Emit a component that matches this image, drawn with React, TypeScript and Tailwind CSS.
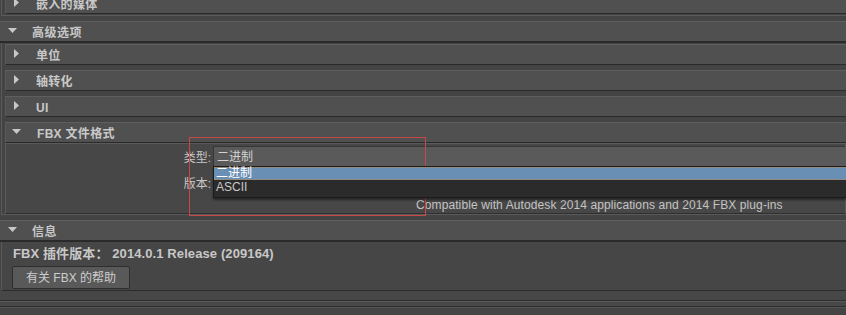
import React from "react";

const FONT = "font-['Liberation_Sans','Noto_Sans_CJK_SC',sans-serif]";

function RightTri() {
  return (
    <svg width="5" height="9" viewBox="0 0 5 9" className="shrink-0">
      <polygon points="0,0 5,4.5 0,9" fill="#c8c8c8" />
    </svg>
  );
}

function DownTri() {
  return (
    <svg width="9" height="5" viewBox="0 0 9 5" className="shrink-0">
      <polygon points="0,0 9,0 4.5,5" fill="#c8c8c8" />
    </svg>
  );
}

function SubHeader({ label, open = false, mb = true }: { label: string; open?: boolean; mb?: boolean }) {
  return (
    <div
      className={`h-[21px] flex items-center bg-[#505050] border-t border-t-[#5f5f5f] border-b border-b-[#2a2a2a] border-l border-l-[#5a5a5a] ${mb ? "mb-[5px]" : ""}`}
    >
      {open ? (
        <div className="ml-[6px] mt-[-2px]">
          <DownTri />
        </div>
      ) : (
        <div className="ml-[8px] mt-[-3px]">
          <RightTri />
        </div>
      )}
      <span className={`${open ? "ml-[16px]" : "ml-[17px]"} text-[12px] font-bold text-[#c8c8c8] leading-none pt-[2px] tracking-[0.3px]`}>
        {label}
      </span>
    </div>
  );
}

function TopHeader({ label }: { label: string }) {
  return (
    <div className="h-[22px] flex items-center bg-[#505050] border-t border-t-[#5f5f5f] border-b-2 border-b-[#2a2a2a]">
      <div className="ml-[8px] mt-[-2px]">
        <DownTri />
      </div>
      <span className="ml-[15px] text-[12px] font-bold text-[#c8c8c8] leading-none pt-[3px] tracking-[0.5px]">{label}</span>
    </div>
  );
}

export default function App() {
  return (
    <div className={`relative w-[846px] h-[315px] overflow-hidden bg-[#444444] ${FONT}`}>
      <div className="-mt-[7px]">
        {/* previous section content (partial) */}
        <div className="ml-[1px] border-l border-l-[#5a5a5a] pl-[3px] pb-[1px] border-b border-b-[#5a5a5a]">
          <SubHeader label="嵌入的媒体" mb={false} />
        </div>

        <div className="mt-[5px]">
          <TopHeader label="高级选项" />
          <div className="ml-[1px] border-l border-l-[#5a5a5a] pl-[3px] pt-[1px] border-b border-b-[#5a5a5a]">
            <SubHeader label="单位" />
            <SubHeader label="轴转化" />
            <SubHeader label="UI" />
            <SubHeader label="FBX 文件格式" open mb={false} />
            {/* FBX content */}
            <div className="h-[71px] border border-[#5a5a5a] border-b-[#2f2f2f] bg-[#474747] pt-[2px]">
              <div className="flex h-[20px]">
                <div className="w-[205px] text-right text-[12px] text-[#c8c8c8] leading-[20px] pt-[2px]">类型:</div>
                <div className="relative ml-[2px] flex-1 bg-[#5a5a5a] border-t border-l border-[#363636] text-[12px] text-[#d2d2d2] leading-[18px] pl-[3px] pt-[1px]">
                  二进制
                  <div className="absolute left-[-1px] right-[-2px] top-[19px] h-[32px] bg-[#2b2b2b] border border-[#1c1c1c] shadow-[0_2px_2px_rgba(0,0,0,0.45)] z-10">
                    <div className="h-[13px] bg-[#6a8fb5] border-y border-dotted border-y-[#b8864e] text-[12px] text-white leading-[11px] pl-[2px]">
                      二进制
                    </div>
                    <div className="h-[15px] text-[12px] text-[#c8c8c8] leading-[15px] pl-[2px]">ASCII</div>
                  </div>
                </div>
              </div>
              <div className="flex h-[20px] mt-[8px]">
                <div className="w-[205px] text-right text-[12px] text-[#c8c8c8] leading-[20px]">版本:</div>
                <div className="ml-[2px] flex-1 bg-[#5a5a5a]" />
              </div>
              <div className="mt-[4px] h-[15px] pl-[410px] text-[12px] text-[#c4c4c4] leading-[15px] whitespace-nowrap tracking-[0.1px]">
                Compatible with Autodesk 2014 applications and 2014 FBX plug-ins
              </div>
            </div>
          </div>
        </div>

        <div className="mt-[5px]">
          <TopHeader label="信息" />
          <div className="ml-[1px] border-l border-l-[#5a5a5a] pl-[11px] pt-[4px] pb-[1px] border-b border-b-[#2c2c2c] bg-[#464646]">
            <div className="h-[16px] text-[13px] font-bold text-[#c8c8c8] leading-[16px] whitespace-nowrap tracking-[0.1px]">
              FBX 插件版本： 2014.0.1 Release (209164)
            </div>
            <button className="mt-[4px] -ml-[1px] w-[118px] h-[23px] bg-[#595959] border border-[#2e2e2e] rounded-[2px] text-[12px] text-[#cdcdcd] flex items-center justify-center">
              有关 FBX 的帮助
            </button>
          </div>
          <div className="h-[9px] bg-[#474747]" />
          <div className="h-px bg-[#2c2c2c]" />
          <div className="h-px bg-[#5a5a5a]" />
          <div className="h-[4px] bg-[#484848]" />
          <div className="h-px bg-[#2c2c2c]" />
          <div className="h-px bg-[#555555]" />
        </div>
      </div>

      {/* red highlight rectangle */}
      <div className="absolute left-[189px] top-[137px] w-[237px] h-[79px] border border-[#c84848] pointer-events-none" />
    </div>
  );
}
